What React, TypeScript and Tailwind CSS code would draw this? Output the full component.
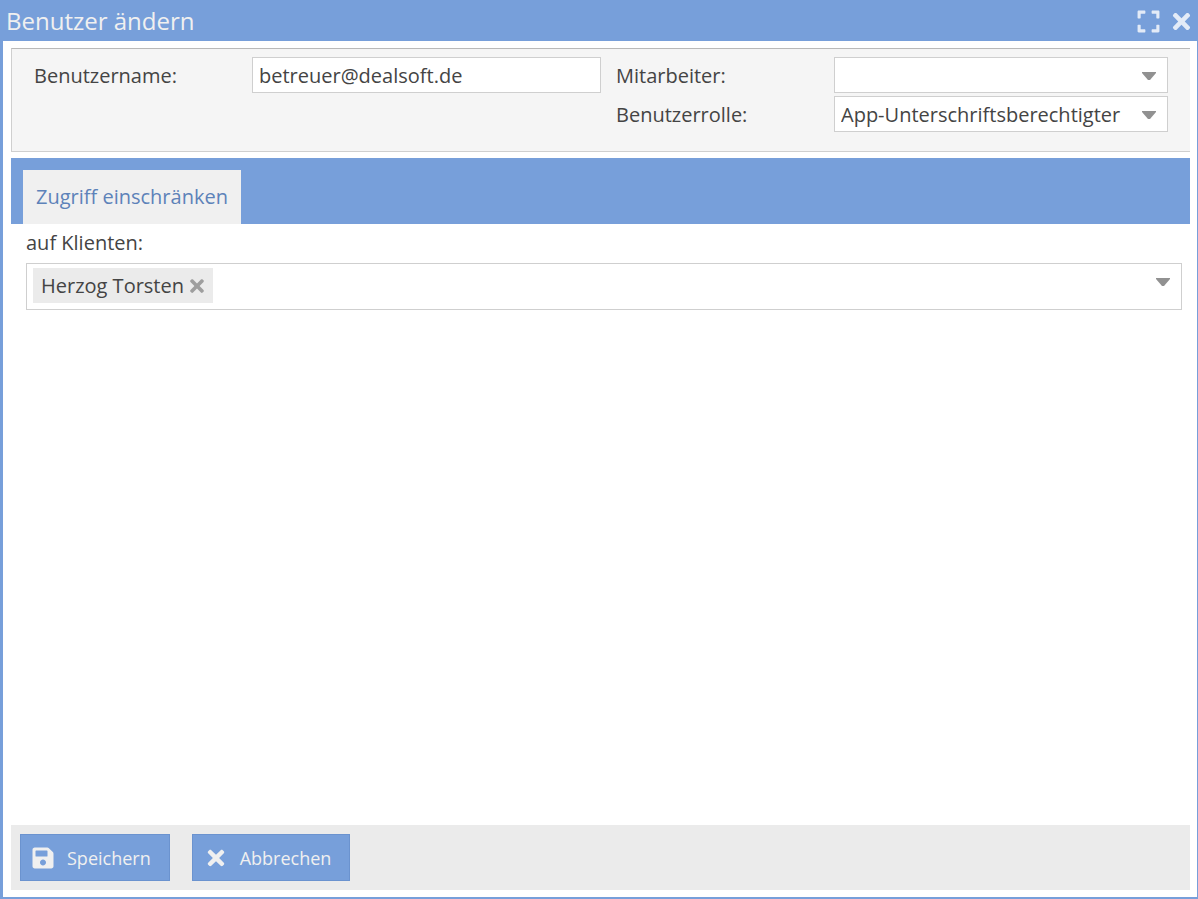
import { useState } from "react";
import { FaExpand, FaSave, FaTimes } from "react-icons/fa";

const Caret = () => (
  <svg viewBox="0 0 14 8" className="h-2 w-3.5 fill-[#919191]" aria-hidden="true">
    <path d="M0 0h14v1L8 8H6L0 1z" />
  </svg>
);

type SelectFieldProps = {
  id: string;
  label: string;
  options: string[];
  value: string;
  onChange: (value: string) => void;
};

const SelectField = ({ id, label, options, value, onChange }: SelectFieldProps) => (
  <div className="flex items-start">
    <label htmlFor={id} className="w-[218px] shrink-0 pt-[5px]">
      {label}
    </label>
    <div className="relative min-w-0 flex-1">
      <select
        id={id}
        value={value}
        onChange={(e) => onChange(e.target.value)}
        className="block h-9 w-full appearance-none border border-[#cfcfcf] bg-white pt-0.5 pr-9 pl-1.5 outline-none"
      >
        {options.map((option) => (
          <option key={option} value={option}>
            {option}
          </option>
        ))}
      </select>
      <span className="pointer-events-none absolute inset-y-0 right-3 flex items-center pt-0.5">
        <Caret />
      </span>
    </div>
  </div>
);

const App = () => {
  const [username, setUsername] = useState("betreuer@dealsoft.de");
  const [employee, setEmployee] = useState("");
  const [role, setRole] = useState("App-Unterschriftsberechtigter");
  const [clients, setClients] = useState(["Herzog Torsten"]);

  return (
    <div className="flex min-h-screen flex-col border-r border-b-2 border-l-3 border-[#779fda] bg-white font-['Open_Sans',sans-serif] text-xl leading-7 text-[#444444]">
      <header className="flex h-[41px] items-center justify-between bg-[#779fda] pr-[3px] pl-[3px] text-[#f0f0f0]">
        <h1 className="text-2xl">Benutzer ändern</h1>
        <div className="flex items-center gap-2 pt-px">
          <button type="button" aria-label="Maximieren">
            <FaExpand className="size-[25px] text-[#e3ebf7]" />
          </button>
          <button type="button" aria-label="Schließen">
            <FaTimes className="size-[25px] text-[#e3ebf7]" />
          </button>
        </div>
      </header>

      <main className="flex flex-1 flex-col pt-[7px] pr-[7px] pb-[7px] pl-2">
        <section className="grid min-h-[104px] grid-cols-[567fr_552fr] gap-x-[15px] border-y border-l border-t-[#b9b9b9] border-b-[#cfcfcf] border-l-[#cfcfcf] bg-[#f5f5f5] px-[22px] pt-2 pb-[18px]">
          <div className="flex items-start">
            <label htmlFor="username" className="w-[218px] shrink-0 pt-[5px]">
              Benutzername:
            </label>
            <input
              id="username"
              type="text"
              value={username}
              onChange={(e) => setUsername(e.target.value)}
              className="h-9 min-w-0 flex-1 border border-[#cfcfcf] bg-white px-1.5 outline-none"
            />
          </div>
          <div className="flex flex-col gap-[3px]">
            <SelectField
              id="employee"
              label="Mitarbeiter:"
              options={[""]}
              value={employee}
              onChange={setEmployee}
            />
            <SelectField
              id="role"
              label="Benutzerrolle:"
              options={["App-Unterschriftsberechtigter"]}
              value={role}
              onChange={setRole}
            />
          </div>
        </section>

        <div role="tablist" className="mt-1.5 flex h-[66px] items-end bg-[#779fda] px-3">
          <button
            type="button"
            role="tab"
            id="tab-access"
            aria-selected="true"
            aria-controls="panel-access"
            className="h-[54px] bg-[#f0f0f0] px-[13px] text-[#5d82b9]"
          >
            Zugriff einschränken
          </button>
        </div>

        <section
          role="tabpanel"
          id="panel-access"
          aria-labelledby="tab-access"
          className="flex-1 pt-[5px] pr-2 pl-[15px]"
        >
          <label htmlFor="clients" className="block">
            auf Klienten:
          </label>
          <div className="mt-1.5 flex min-h-[47px] items-start border border-[#cfcfcf] px-1.5 pt-1">
            <ul className="flex flex-wrap gap-1">
              {clients.map((client) => (
                <li key={client} className="flex h-[35px] items-center gap-[3px] bg-[#ebebeb] pr-1.5 pl-2">
                  {client}
                  <button
                    type="button"
                    aria-label={`${client} entfernen`}
                    onClick={() => setClients(clients.filter((c) => c !== client))}
                  >
                    <FaTimes className="size-5 text-[#9e9e9e]" />
                  </button>
                </li>
              ))}
            </ul>
            <input id="clients" type="text" className="h-[35px] min-w-0 flex-1 px-1.5 outline-none" />
            <button type="button" aria-label="Klienten auswählen" className="flex h-7 items-center px-[5px]">
              <Caret />
            </button>
          </div>
        </section>

        <footer className="flex gap-[22px] bg-[#ebebeb] p-[9px]">
          <button
            type="button"
            className="flex h-[47px] items-center gap-3 border border-[#6b93cf] bg-[#779fda] pr-[18px] pl-2.5 text-lg text-[#f0f0f0]"
          >
            <FaSave className="size-6" />
            Speichern
          </button>
          <button
            type="button"
            className="flex h-[47px] items-center gap-3 border border-[#6b93cf] bg-[#779fda] pr-[18px] pl-[11px] text-lg text-[#f0f0f0]"
          >
            <FaTimes className="size-6" />
            Abbrechen
          </button>
        </footer>
      </main>
    </div>
  );
};

export default App;
